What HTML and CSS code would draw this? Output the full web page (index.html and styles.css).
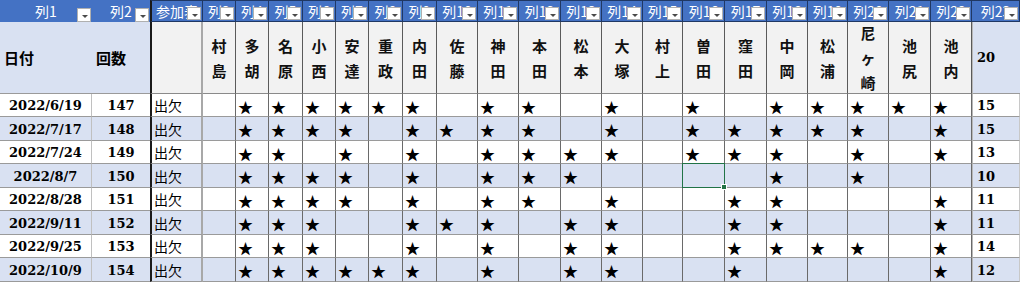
FILE: index.html
```html
<!DOCTYPE html>
<html lang="ja">
<head>
<meta charset="utf-8">
<title>参加表</title>
<link rel="stylesheet" href="styles.css">
</head>
<body>
<div class="sheet">
  <!-- header row 1 -->
  <div class="h">列1<span class="dd"></span></div>
  <div class="h">列2<span class="dd"></span></div>
  <div class="h hk">参加表<span class="dd"></span></div>
  <div class="h">列3<span class="dd"></span></div>
  <div class="h">列4<span class="dd"></span></div>
  <div class="h">列5<span class="dd"></span></div>
  <div class="h">列6<span class="dd"></span></div>
  <div class="h">列7<span class="dd"></span></div>
  <div class="h">列8<span class="dd"></span></div>
  <div class="h">列9<span class="dd"></span></div>
  <div class="h">列10<span class="dd"></span></div>
  <div class="h">列11<span class="dd"></span></div>
  <div class="h">列12<span class="dd"></span></div>
  <div class="h">列13<span class="dd"></span></div>
  <div class="h">列14<span class="dd"></span></div>
  <div class="h">列15<span class="dd"></span></div>
  <div class="h">列16<span class="dd"></span></div>
  <div class="h">列17<span class="dd"></span></div>
  <div class="h">列18<span class="dd"></span></div>
  <div class="h">列19<span class="dd"></span></div>
  <div class="h">列20<span class="dd"></span></div>
  <div class="h">列21<span class="dd"></span></div>
  <div class="h">列22<span class="dd"></span></div>
  <div class="h hl">列23<span class="dd"></span></div>

  <!-- header row 2 -->
  <div class="t t1">日付</div>
  <div class="t t2">回数</div>
  <div class="n k"></div>
  <div class="n">村<br>島</div>
  <div class="n">多<br>胡</div>
  <div class="n">名<br>原</div>
  <div class="n">小<br>西</div>
  <div class="n">安<br>達</div>
  <div class="n">重<br>政</div>
  <div class="n">内<br>田</div>
  <div class="n">佐<br>藤</div>
  <div class="n">神<br>田</div>
  <div class="n">本<br>田</div>
  <div class="n">松<br>本</div>
  <div class="n">大<br>塚</div>
  <div class="n">村<br>上</div>
  <div class="n">曽<br>田</div>
  <div class="n">窪<br>田</div>
  <div class="n">中<br>岡</div>
  <div class="n">松<br>浦</div>
  <div class="n">尼<br>ヶ<br>崎</div>
  <div class="n">池<br>尻</div>
  <div class="n">池<br>内</div>
  <div class="tot">20</div>

  <!-- row 1 -->
  <div class="c d">2022/6/19</div><div class="c no">147</div><div class="c k at">出欠</div>
  <div class="c s f"></div><div class="c s">★</div><div class="c s">★</div><div class="c s">★</div><div class="c s">★</div><div class="c s">★</div><div class="c s">★</div><div class="c s"></div><div class="c s">★</div><div class="c s">★</div><div class="c s"></div><div class="c s">★</div><div class="c s"></div><div class="c s">★</div><div class="c s"></div><div class="c s">★</div><div class="c s">★</div><div class="c s">★</div><div class="c s">★</div><div class="c s">★</div><div class="c v">15</div>

  <!-- row 2 -->
  <div class="c b d">2022/7/17</div><div class="c b no">148</div><div class="c b k at">出欠</div>
  <div class="c b s f"></div><div class="c b s">★</div><div class="c b s">★</div><div class="c b s">★</div><div class="c b s">★</div><div class="c b s"></div><div class="c b s">★</div><div class="c b s">★</div><div class="c b s">★</div><div class="c b s">★</div><div class="c b s"></div><div class="c b s">★</div><div class="c b s"></div><div class="c b s">★</div><div class="c b s">★</div><div class="c b s">★</div><div class="c b s">★</div><div class="c b s">★</div><div class="c b s"></div><div class="c b s">★</div><div class="c b v">15</div>

  <!-- row 3 -->
  <div class="c d">2022/7/24</div><div class="c no">149</div><div class="c k at">出欠</div>
  <div class="c s f"></div><div class="c s">★</div><div class="c s">★</div><div class="c s"></div><div class="c s">★</div><div class="c s"></div><div class="c s">★</div><div class="c s"></div><div class="c s">★</div><div class="c s">★</div><div class="c s">★</div><div class="c s">★</div><div class="c s"></div><div class="c s">★</div><div class="c s">★</div><div class="c s">★</div><div class="c s"></div><div class="c s">★</div><div class="c s"></div><div class="c s">★</div><div class="c v">13</div>

  <!-- row 4 -->
  <div class="c b d">2022/8/7</div><div class="c b no">150</div><div class="c b k at">出欠</div>
  <div class="c b s f"></div><div class="c b s">★</div><div class="c b s">★</div><div class="c b s">★</div><div class="c b s">★</div><div class="c b s"></div><div class="c b s">★</div><div class="c b s"></div><div class="c b s">★</div><div class="c b s">★</div><div class="c b s">★</div><div class="c b s"></div><div class="c b s"></div><div class="c b s sel"><span class="grip"></span></div><div class="c b s"></div><div class="c b s">★</div><div class="c b s"></div><div class="c b s">★</div><div class="c b s"></div><div class="c b s"></div><div class="c b v">10</div>

  <!-- row 5 -->
  <div class="c d">2022/8/28</div><div class="c no">151</div><div class="c k at">出欠</div>
  <div class="c s f"></div><div class="c s">★</div><div class="c s">★</div><div class="c s">★</div><div class="c s">★</div><div class="c s"></div><div class="c s">★</div><div class="c s"></div><div class="c s">★</div><div class="c s">★</div><div class="c s"></div><div class="c s">★</div><div class="c s"></div><div class="c s"></div><div class="c s">★</div><div class="c s">★</div><div class="c s"></div><div class="c s"></div><div class="c s"></div><div class="c s">★</div><div class="c v">11</div>

  <!-- row 6 -->
  <div class="c b d">2022/9/11</div><div class="c b no">152</div><div class="c b k at">出欠</div>
  <div class="c b s f"></div><div class="c b s">★</div><div class="c b s">★</div><div class="c b s">★</div><div class="c b s"></div><div class="c b s"></div><div class="c b s">★</div><div class="c b s">★</div><div class="c b s">★</div><div class="c b s"></div><div class="c b s">★</div><div class="c b s">★</div><div class="c b s"></div><div class="c b s"></div><div class="c b s">★</div><div class="c b s">★</div><div class="c b s"></div><div class="c b s"></div><div class="c b s"></div><div class="c b s">★</div><div class="c b v">11</div>

  <!-- row 7 -->
  <div class="c d">2022/9/25</div><div class="c no">153</div><div class="c k at">出欠</div>
  <div class="c s f"></div><div class="c s">★</div><div class="c s">★</div><div class="c s">★</div><div class="c s"></div><div class="c s"></div><div class="c s">★</div><div class="c s"></div><div class="c s">★</div><div class="c s"></div><div class="c s">★</div><div class="c s">★</div><div class="c s"></div><div class="c s"></div><div class="c s">★</div><div class="c s">★</div><div class="c s">★</div><div class="c s">★</div><div class="c s"></div><div class="c s">★</div><div class="c v">14</div>

  <!-- row 8 -->
  <div class="c b d">2022/10/9</div><div class="c b no">154</div><div class="c b k at">出欠</div>
  <div class="c b s f"></div><div class="c b s">★</div><div class="c b s">★</div><div class="c b s">★</div><div class="c b s">★</div><div class="c b s">★</div><div class="c b s">★</div><div class="c b s"></div><div class="c b s">★</div><div class="c b s"></div><div class="c b s">★</div><div class="c b s">★</div><div class="c b s"></div><div class="c b s"></div><div class="c b s">★</div><div class="c b s"></div><div class="c b s"></div><div class="c b s"></div><div class="c b s"></div><div class="c b s">★</div><div class="c b v">12</div>
</div>
</body>
</html>
```
FILE: styles.css
```css
html, body {
  margin: 0;
  padding: 0;
  background: #ffffff;
}

.sheet {
  display: grid;
  grid-template-columns: 92px 58px 53px 33px 33px 34px 33px 33px 34px 34px 41px 41px 42px 41px 41px 40px 42px 42px 41px 40px 41px 42px 41px 48px;
  grid-template-rows: 22px 72px 23px 24px 23px 24px 23px 24px 23px 24px;
  width: 1020px;
  font-family: "Noto Sans CJK JP", "Noto Sans", sans-serif;
  color: #000;
}

.sheet > div {
  box-sizing: border-box;
  min-width: 0;
}

/* header row 1 */
.h {
  position: relative;
  background: #4472c4;
  color: #ffffff;
  font-size: 14px;
  line-height: 20px;
  display: flex;
  justify-content: center;
  align-items: center;
  white-space: nowrap;
  overflow: hidden;
  border-right: 1px solid #203864;
  border-top: 1px solid #203864;
  border-bottom: 1px solid #203864;
}
.h:nth-child(1), .h:nth-child(2) {
  border-right: none;
  border-top: none;
  border-bottom: none;
}
.hk {
  border-left: 2px solid #1a1a1a;
}
.h .dd {
  position: absolute;
  right: 1px;
  bottom: 1px;
  width: 14px;
  height: 13px;
  box-sizing: border-box;
  background: #ffffff;
  border: 1px solid #b0b0b0;
}
.h .dd::after {
  content: "";
  position: absolute;
  left: 4px;
  top: 6px;
  border-left: 3px solid transparent;
  border-right: 3px solid transparent;
  border-top: 3px solid #4a4a4a;
}
.h:nth-child(1) .dd, .h:nth-child(2) .dd {
  bottom: 0;
  height: 14px;
}

/* header row 2 */
.t {
  background: #d9e1f2;
  font-weight: 700;
  font-size: 15px;
  display: flex;
  align-items: center;
  border-bottom: 1px solid #9a9a9a;
}
.t1 { padding-left: 4px; }
.t2 { padding-left: 4px; }

.n {
  background: #f2f2f2;
  font-weight: 700;
  font-size: 15px;
  line-height: 25px;
  text-align: center;
  display: flex;
  flex-direction: column;
  justify-content: center;
  align-items: center;
  border-right: 1px solid #5a5a5a;
  border-bottom: 1px solid #8a8a8a;
  color: #111;
}
.n.k {
  border-left: 2px solid #1a1a1a;
  border-right: 2px solid #a8a8a8;
}
.tot {
  background: #d9e1f2;
  font-family: "DejaVu Serif", "Liberation Serif", serif;
  font-weight: 700;
  font-size: 13px;
  display: flex;
  align-items: center;
  padding-left: 4px;
  border-left: 1px solid #b8b8b8;
  border-bottom: 1px solid #9a9a9a;
}

/* data cells */
.c {
  background: #ffffff;
  border-bottom: 1px solid #9a9a9a;
  border-right: 1px solid #6a6a6a;
  display: flex;
  align-items: center;
  white-space: nowrap;
}
.c.b {
  background: #d9e1f2;
}
.d {
  justify-content: center;
  font-family: "DejaVu Serif", "Liberation Serif", serif;
  font-weight: 700;
  font-size: 13px;
  border-right: 1px solid #c0c0c0;
  padding-top: 1px;
}
.no {
  justify-content: center;
  font-family: "DejaVu Serif", "Liberation Serif", serif;
  font-weight: 700;
  font-size: 13px;
  border-right: none;
  padding-top: 1px;
}
.at {
  border-left: 2px solid #1a1a1a;
  border-right: 2px solid #a8a8a8;
  font-size: 14px;
  padding-left: 2px;
}
.s {
  font-size: 15px;
  padding-left: 2px;
  padding-top: 2px;
}
.v {
  font-family: "DejaVu Serif", "Liberation Serif", serif;
  font-weight: 700;
  font-size: 13px;
  padding-left: 4px;
  border-left: 1px solid #b8b8b8;
  border-right: 1px solid #c8c8c8;
  padding-top: 1px;
}

/* selected cell */
.sel {
  position: relative;
}
.sel::before {
  content: "";
  position: absolute;
  left: -1px;
  top: -1px;
  right: -1px;
  bottom: -1px;
  border: 1px solid #217346;
}
.grip {
  position: absolute;
  right: -3px;
  bottom: -3px;
  width: 4px;
  height: 4px;
  background: #217346;
  border: 1px solid #ffffff;
}
```
